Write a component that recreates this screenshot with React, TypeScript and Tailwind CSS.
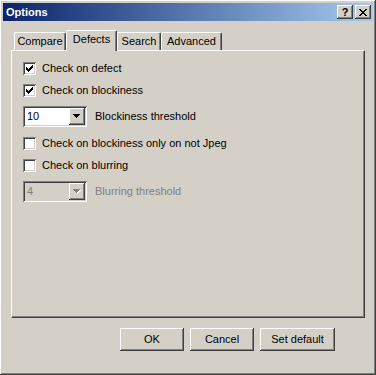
import React from "react";

const raised =
  "shadow-[inset_-1px_-1px_#404040,inset_1px_1px_#ffffff,inset_-2px_-2px_#808080,inset_2px_2px_#d4d0c8]";
const sunken =
  "shadow-[inset_1px_1px_#808080,inset_-1px_-1px_#ffffff,inset_2px_2px_#404040,inset_-2px_-2px_#d4d0c8]";

function CheckMark() {
  const rows: [number, number, number][] = [
    [6, 0, 1],
    [5, 1, 2],
    [0, 2, 1],
    [4, 2, 3],
    [0, 3, 2],
    [3, 3, 3],
    [0, 4, 5],
    [1, 5, 3],
    [2, 6, 1],
  ];
  return (
    <svg width="7" height="7" viewBox="0 0 7 7" shapeRendering="crispEdges">
      {rows.map(([x, y, w], i) => (
        <rect key={i} x={x} y={y} width={w} height={1} fill="#000" />
      ))}
    </svg>
  );
}

function Check({ checked, label }: { checked?: boolean; label: string }) {
  return (
    <div className="flex items-center h-[13px]">
      <div className={`w-[13px] h-[13px] bg-white ${sunken} flex items-center justify-center shrink-0`}>
        {checked && <CheckMark />}
      </div>
      <span className="ml-[6px] text-black leading-none">{label}</span>
    </div>
  );
}

function Arrow({ disabled }: { disabled?: boolean }) {
  const c = disabled ? "#808080" : "#000";
  return (
    <svg width="8" height="5" viewBox="0 0 8 5" shapeRendering="crispEdges">
      {disabled && (
        <>
          <rect x="1" y="1" width="7" height="1" fill="#fff" />
          <rect x="2" y="2" width="5" height="1" fill="#fff" />
          <rect x="3" y="3" width="3" height="1" fill="#fff" />
          <rect x="4" y="4" width="1" height="1" fill="#fff" />
        </>
      )}
      <rect x="0" y="0" width="7" height="1" fill={c} />
      <rect x="1" y="1" width="5" height="1" fill={c} />
      <rect x="2" y="2" width="3" height="1" fill={c} />
      <rect x="3" y="3" width="1" height="1" fill={c} />
    </svg>
  );
}

function Combo({ value, label, disabled }: { value: string; label: string; disabled?: boolean }) {
  return (
    <div className="flex items-center h-[21px]">
      <div
        className={`w-[64px] h-[21px] ${disabled ? "bg-[#d4d0c8]" : "bg-white"} ${sunken} flex items-stretch p-[2px] shrink-0`}
      >
        <span className={`flex-1 pl-[2px] flex items-center ${disabled ? "text-[#808080]" : "text-black"}`}>
          {value}
        </span>
        <div className={`w-[16px] bg-[#d4d0c8] ${raised} flex items-center justify-center`}>
          <Arrow disabled={disabled} />
        </div>
      </div>
      <span className={`ml-[8px] ${disabled ? "text-[#808080]" : "text-black"}`}>{label}</span>
    </div>
  );
}

function Tab({ label, selected, w }: { label: string; selected?: boolean; w: string }) {
  return (
    <div
      className={`${w} ${selected ? "h-[21px] -mb-[1px] z-10 pb-[3px]" : "h-[18px]"} relative bg-[#d4d0c8] border-t border-l border-white border-r border-r-[#404040] rounded-t-[2px] flex items-center justify-center shadow-[inset_-1px_0_#808080] text-black`}
    >
      {label}
    </div>
  );
}

function Button({ label, w }: { label: string; w: string }) {
  return (
    <div className={`${w} h-[23px] bg-[#d4d0c8] ${raised} flex items-center justify-center text-black`}>
      {label}
    </div>
  );
}

export default function App() {
  return (
    <div
      className={`w-[376px] h-[375px] bg-[#d4d0c8] ${raised} p-[3px] flex flex-col font-['Liberation_Sans',Arial,sans-serif] text-[11px] select-none`}
    >
      <div className="h-[18px] bg-[linear-gradient(to_right,#0a246a,#a6caf0)] flex items-center pl-[3px] pr-[2px]">
        <span className="text-white font-bold text-[11px] flex-1">Options</span>
        <div className={`w-[16px] h-[14px] bg-[#d4d0c8] ${raised} flex items-center justify-center font-bold text-[11px] text-black leading-none`}>
          ?
        </div>
        <div className={`ml-[2px] w-[16px] h-[14px] bg-[#d4d0c8] ${raised} flex items-center justify-center`}>
          <svg width="8" height="7" viewBox="0 0 8 7" shapeRendering="crispEdges">
            <path d="M0 0h2v1h-2zM6 0h2v1h-2zM1 1h2v1h-2zM5 1h2v1h-2zM2 2h4v1h-4zM3 3h2v1h-2zM2 4h4v1h-4zM1 5h2v1h-2zM5 5h2v1h-2zM0 6h2v1h-2zM6 6h2v1h-2z" fill="#000" />
          </svg>
        </div>
      </div>

      <div className="mt-[9px] ml-[8px] mr-[8px] flex flex-col">
        <div className="flex items-end pl-[3px] h-[20px]">
          <Tab label="Compare" w="w-[52px]" />
          <Tab label="Defects" w="w-[51px]" selected />
          <Tab label="Search" w="w-[44px]" />
          <Tab label="Advanced" w="w-[61px]" />
        </div>
        <div className="h-[268px] border-t border-l border-white border-r border-b border-r-[#404040] border-b-[#404040] shadow-[inset_-1px_-1px_#808080] flex flex-col pl-[11px] pt-[11px]">
          <Check checked label="Check on defect" />
          <div className="mt-[9px]">
            <Check checked label="Check on blockiness" />
          </div>
          <div className="mt-[9px]">
            <Combo value="10" label="Blockiness threshold" />
          </div>
          <div className="mt-[10px]">
            <Check label="Check on blockiness only on not Jpeg" />
          </div>
          <div className="mt-[9px]">
            <Check label="Check on blurring" />
          </div>
          <div className="mt-[9px]">
            <Combo value="4" label="Blurring threshold" disabled />
          </div>
        </div>
      </div>

      <div className="mt-[10px] flex pl-[117px] gap-[6px]">
        <Button label="OK" w="w-[64px]" />
        <Button label="Cancel" w="w-[64px]" />
        <Button label="Set default" w="w-[75px]" />
      </div>
    </div>
  );
}
